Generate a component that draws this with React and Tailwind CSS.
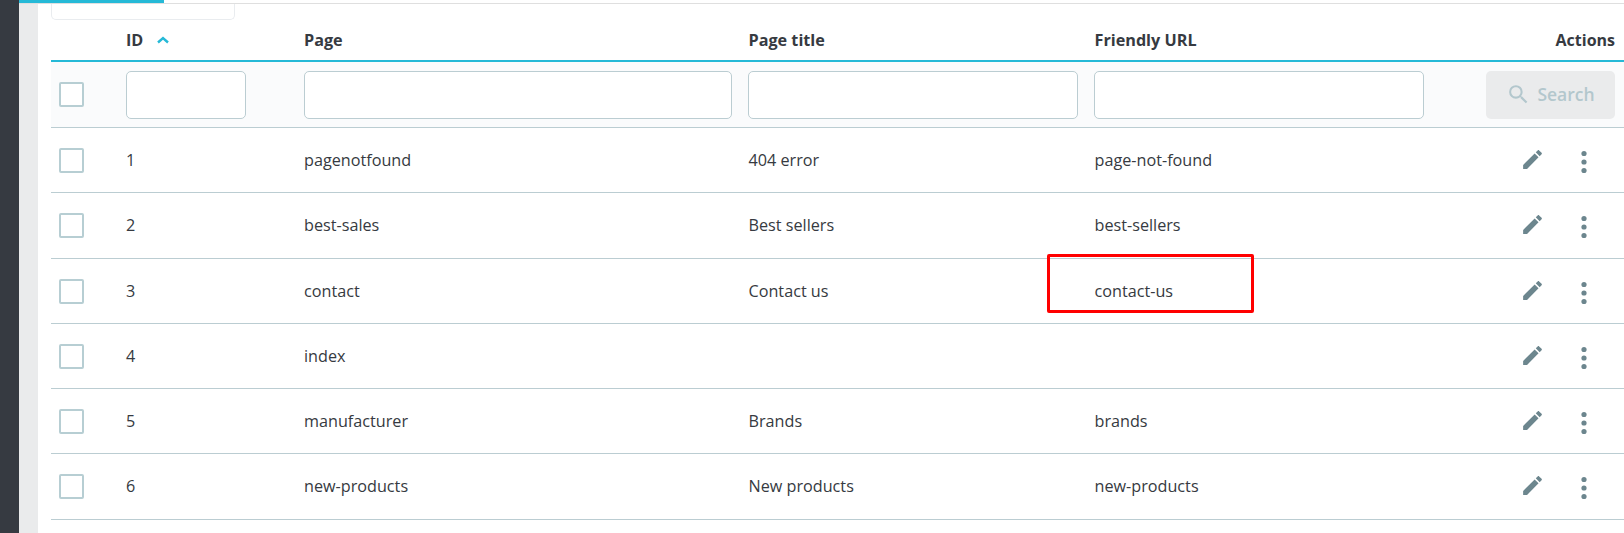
import React from 'react'

const rows = [
  { id: 1, page: 'pagenotfound', title: '404 error', url: 'page-not-found', height: 'h-[65px]' },
  { id: 2, page: 'best-sales', title: 'Best sellers', url: 'best-sellers', height: 'h-[66px]' },
  { id: 3, page: 'contact', title: 'Contact us', url: 'contact-us', height: 'h-[65px]' },
  { id: 4, page: 'index', title: '', url: '', height: 'h-[65px]' },
  { id: 5, page: 'manufacturer', title: 'Brands', url: 'brands', height: 'h-[65px]' },
  { id: 6, page: 'new-products', title: 'New products', url: 'new-products', height: 'h-[66px]' },
]

const gridCols = 'grid grid-cols-[75px_178px_444px_346px_1fr] items-center'

function Checkbox() {
  return <div className="w-[25px] h-[25px] ml-2 rounded-[2px] border-2 border-[#b7ced3] bg-white" />
}

function FilterInput({ className }) {
  return <div className={`h-[48px] rounded-[5px] border border-[#bbcdd2] bg-white ${className}`} />
}

function EditIcon() {
  return (
    <svg width="25" height="25" viewBox="0 0 24 24" fill="#6c868e" className="-mt-[2px]">
      <path d="M3 17.25V21h3.75L17.81 9.94l-3.75-3.75L3 17.25zM20.71 7.04c.39-.39.39-1.02 0-1.41l-2.34-2.34c-.39-.39-1.02-.39-1.41 0l-1.83 1.83 3.75 3.75 1.83-1.83z" />
    </svg>
  )
}

function MoreIcon() {
  return (
    <svg width="8" height="26" viewBox="0 0 8 26" fill="#6c868e" className="mt-[3px]">
      <circle cx="4" cy="4.5" r="2.6" />
      <circle cx="4" cy="13" r="2.6" />
      <circle cx="4" cy="21.5" r="2.6" />
    </svg>
  )
}

export default function App() {
  return (
    <div className="relative w-[1624px] h-[533px] overflow-hidden flex bg-white text-[#363a41] text-[16.2px] font-['Open_Sans',sans-serif]">
      <div className="w-[19px] bg-[#363a41]" />
      <div className="w-[19px] bg-[#eaebec]" />
      <div className="flex-1 min-w-0">
        <div className="h-[4px] border-b border-[#dfdfdf] -ml-[19px]">
          <div className="w-[145px] h-[3px] bg-[#25b9d7]" />
        </div>
        <div className="pl-[13px]">
          <div className="w-[184px] h-[16px] bg-white border border-t-0 border-[#e9ecef] rounded-b-[5px]" />

          <div className={`${gridCols} h-[42px] border-b-2 border-[#25b9d7] font-bold`}>
            <div />
            <div className="flex items-center gap-[14px]">
              ID
              <svg width="12" height="8" viewBox="0 0 12 8" fill="none" stroke="#25b9d7" strokeWidth="2.4">
                <path d="M1 6.5l5-4.5 5 4.5" />
              </svg>
            </div>
            <div>Page</div>
            <div className="pl-[0.5px]">Page title</div>
            <div className="flex justify-between pl-[0.5px] pr-[9px]">
              <span>Friendly URL</span>
              <span className="text-[16px]">Actions</span>
            </div>
          </div>

          <div className={`${gridCols} h-[66px] bg-[#fafbfc] border-b border-[#bbcdd2]`}>
            <Checkbox />
            <FilterInput className="w-[120px]" />
            <FilterInput className="w-[428px]" />
            <FilterInput className="w-[330px]" />
            <div className="flex justify-between pr-[9px]">
              <FilterInput className="w-[330px]" />
              <div className="w-[129px] h-[48px] pb-[1px] rounded-[5px] bg-[#eaebec] flex items-center justify-center gap-[6px] text-[#b3c7cd] font-semibold text-[17.5px]">
                <svg width="25" height="25" viewBox="0 0 24 24" fill="#b3c7cd">
                  <path d="M15.5 14h-.79l-.28-.27A6.47 6.47 0 0 0 16 9.5 6.5 6.5 0 1 0 9.5 16c1.61 0 3.09-.59 4.23-1.57l.27.28v.79l5 4.99L20.49 19l-4.99-5zm-6 0C7.01 14 5 11.99 5 9.5S7.01 5 9.5 5 14 7.01 14 9.5 11.99 14 9.5 14z" />
                </svg>
                Search
              </div>
            </div>
          </div>

          {rows.map((row) => (
            <div key={row.id} className={`${gridCols} ${row.height} border-b border-[#bbcdd2]`}>
              <Checkbox />
              <div>{row.id}</div>
              <div>{row.page}</div>
              <div className="pl-[0.5px]">{row.title}</div>
              <div className="flex items-center justify-between pl-[0.5px]">
                <span>{row.url}</span>
                <div className="flex items-center gap-[35px] pr-[36px]">
                  <EditIcon />
                  <MoreIcon />
                </div>
              </div>
            </div>
          ))}
        </div>
      </div>
      <div className="absolute left-[1047px] top-[254px] w-[207px] h-[59px] border-[3px] border-[#ff0000] rounded-[2px]" />
    </div>
  )
}
